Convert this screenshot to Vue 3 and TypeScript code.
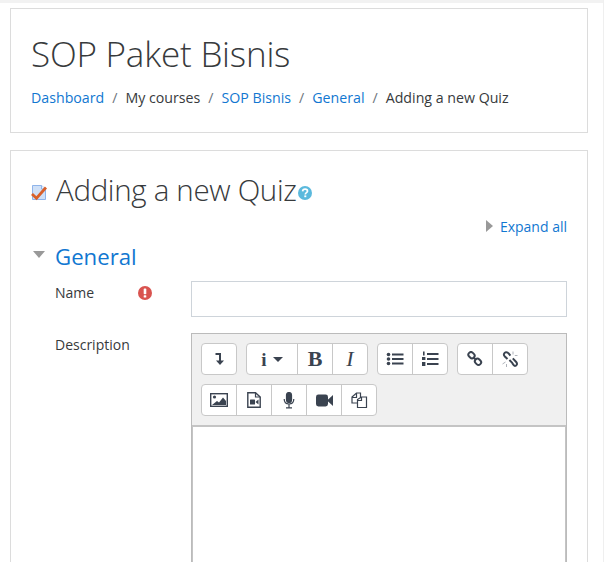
<script setup lang="ts">
const crumbs: { text: string; link: boolean }[] = [
  { text: 'Dashboard', link: true },
  { text: 'My courses', link: false },
  { text: 'SOP Bisnis', link: true },
  { text: 'General', link: true },
  { text: 'Adding a new Quiz', link: false },
]
</script>

<template>
  <div class="page">
    <div class="topbar"></div>
    <main class="wrap">
      <section class="card head">
        <h1>SOP Paket Bisnis</h1>
        <nav class="crumbs">
          <template v-for="(c, i) in crumbs" :key="c.text">
            <span v-if="i > 0" class="sep">/</span>
            <a v-if="c.link" class="link">{{ c.text }}</a>
            <span v-else>{{ c.text }}</span>
          </template>
        </nav>
      </section>

      <section class="card form">
        <div class="title-row">
          <svg class="quiz-icon" width="16" height="17" viewBox="0 0 16 17">
            <path d="M1.5 1.5H10.5L14.5 5V15.5H1.5Z" fill="#cfe0f7" stroke="#8fb4ea" />
            <path d="M10.5 1.5V5H14.5" fill="#eaf2fd" stroke="#8fb4ea" />
            <path d="M1 10L5.5 14.2L15 3.5" fill="none" stroke="#d9602a" stroke-width="2.8" />
          </svg>
          <h2>Adding a new Quiz</h2>
          <svg class="help" width="14" height="14" viewBox="0 0 14 14">
            <circle cx="7" cy="7" r="7" fill="#5bb9dd" />
            <path d="M4.6 5.4C4.7 3.9 5.7 3.2 7.1 3.2C8.5 3.2 9.5 4 9.5 5.2C9.5 6.6 7.3 6.7 7.3 8.4" fill="none" stroke="#fff" stroke-width="1.7" />
            <rect x="6.3" y="9.4" width="2" height="1.8" fill="#fff" />
          </svg>
        </div>

        <div class="expand-row">
          <span class="tri-right"></span>
          <a class="link">Expand all</a>
        </div>

        <div class="legend">
          <span class="tri-down"></span>
          <a class="general">General</a>
        </div>

        <div class="field name-field">
          <div class="label">
            <span>Name</span>
            <svg width="14" height="14" viewBox="0 0 14 14">
              <circle cx="7" cy="7" r="7" fill="#d9534f" />
              <rect x="5.7" y="2.6" width="2.6" height="5.6" rx="0.8" fill="#fff" />
              <rect x="5.7" y="9.2" width="2.6" height="2.3" rx="0.6" fill="#fff" />
            </svg>
          </div>
          <input class="text-input" type="text" />
        </div>

        <div class="field desc-field">
          <div class="label"><span>Description</span></div>
          <div class="editor">
            <div class="toolbar">
              <div class="group">
                <button class="btn">
                  <svg width="12" height="14" viewBox="0 0 12 14"><path d="M2.5 2H7V10" fill="none" stroke="#3a4350" stroke-width="2" /><path d="M3 8.5H11L7 13Z" fill="#3a4350" /></svg>
                </button>
              </div>
              <div class="group">
                <button class="btn wide">
                  <span class="info-i">i</span>
                  <span class="caret"></span>
                </button>
                <button class="btn"><span class="bold">B</span></button>
                <button class="btn"><span class="italic">I</span></button>
              </div>
              <div class="group">
                <button class="btn">
                  <svg width="18" height="14" viewBox="0 0 18 14" fill="#3a4350">
                    <circle cx="2.5" cy="2.5" r="1.8" /><circle cx="2.5" cy="7" r="1.8" /><circle cx="2.5" cy="11.5" r="1.8" />
                    <rect x="6" y="1.5" width="11.5" height="2" /><rect x="6" y="6" width="11.5" height="2" /><rect x="6" y="10.5" width="11.5" height="2" />
                  </svg>
                </button>
                <button class="btn">
                  <svg width="18" height="16" viewBox="0 0 18 16" fill="#3a4350">
                    <rect x="2" y="0.5" width="1.6" height="4" /><rect x="1" y="6" width="3.4" height="3" /><rect x="1" y="11" width="3.4" height="4" />
                    <rect x="6" y="2" width="11.5" height="2" /><rect x="6" y="7" width="11.5" height="2" /><rect x="6" y="12" width="11.5" height="2" />
                  </svg>
                </button>
              </div>
              <div class="group">
                <button class="btn">
                  <svg width="16" height="16" viewBox="0 0 16 16" fill="none" stroke="#3a4350" stroke-width="2">
                    <rect x="1.2" y="1.6" width="6.6" height="5.2" rx="2.6" transform="rotate(45 4.5 4.2)" />
                    <rect x="7.7" y="8.2" width="6.6" height="5.2" rx="2.6" transform="rotate(45 11 10.8)" />
                    <path d="M6.5 6.5L9 8.8" />
                  </svg>
                </button>
                <button class="btn">
                  <svg width="16" height="17" viewBox="0 0 16 17" fill="none" stroke="#3a4350" stroke-width="2">
                    <path d="M5.5 8L2.6 5.2C1.2 3.6 2 1.6 4 1.2C5.4 1 6.2 1.8 7 2.8L8.4 4.6" />
                    <path d="M7.4 9L10 11.6C10.8 12.6 11.4 14.8 13 15C15 15 15.6 12.6 14.2 11L10.8 7.4" />
                    <path d="M11 0.5V3.5M12.8 4.5H15.5M0.5 13L3.5 11M4.5 16V13" stroke="#9aa0a8" stroke-width="0.8" />
                  </svg>
                </button>
              </div>
              <div class="group">
                <button class="btn">
                  <svg width="18" height="14" viewBox="0 0 18 14">
                    <rect x="0.7" y="0.7" width="16.6" height="12.6" fill="#fff" stroke="#3a4350" stroke-width="1.4" />
                    <circle cx="4.5" cy="4" r="1.6" fill="#3a4350" />
                    <path d="M2 12L7 8L9 9.5L13 4.5L16 8V12Z" fill="#3a4350" />
                  </svg>
                </button>
                <button class="btn">
                  <svg width="14" height="16" viewBox="0 0 14 16">
                    <path d="M0.8 0.8H8.5L13.2 5V15.2H0.8Z" fill="#fff" stroke="#3a4350" stroke-width="1.4" />
                    <path d="M8.5 0.8V5H13.2" fill="none" stroke="#3a4350" stroke-width="1.2" />
                    <rect x="3" y="7.5" width="5" height="5" rx="0.6" fill="#3a4350" />
                    <path d="M8.5 10L11.5 7.5V12.5Z" fill="#3a4350" />
                  </svg>
                </button>
                <button class="btn">
                  <svg width="12" height="17" viewBox="0 0 12 17" fill="none" stroke="#3a4350" stroke-width="1.2">
                    <rect x="3.5" y="0.5" width="5" height="10" rx="2.5" fill="#3a4350" />
                    <path d="M1.2 7C1.2 10.2 3 12 6 12S10.8 10.2 10.8 7M6 12V15.5M3 15.8H9" />
                  </svg>
                </button>
                <button class="btn">
                  <svg width="17" height="13" viewBox="0 0 17 13" fill="#3a4350">
                    <rect x="0" y="0.5" width="12" height="12" rx="2.4" />
                    <path d="M11 6.5L17 1V12Z" />
                  </svg>
                </button>
                <button class="btn">
                  <svg width="17" height="17" viewBox="0 0 17 17" fill="#fff" stroke="#3a4350" stroke-width="1.2">
                    <path d="M1 5L5.5 1H9.5V11H1Z" />
                    <path d="M1 5.5H5.5V1" fill="none" />
                    <path d="M6.5 7.5L10.5 5H15.5V15.5H6.5Z" />
                    <path d="M6.5 8.5H10.5V5" fill="none" />
                  </svg>
                </button>
              </div>
            </div>
            <div class="content"></div>
          </div>
        </div>
      </section>
    </main>
    <div class="edge"></div>
  </div>
</template>

<style>
html, body { margin: 0; background: #fff; overflow: hidden; }
</style>

<style scoped>
.page {
  position: relative;
  width: 604px;
  height: 562px;
  overflow: hidden;
  background: #fff;
  font-family: "Open Sans", "Noto Sans", sans-serif;
  font-size: 14px;
  color: #373a3c;
}
.topbar {
  height: 3px;
  background: #f2f2f2;
}
.edge {
  position: absolute;
  top: 0;
  right: 0;
  bottom: 0;
  width: 1px;
  background: #efefef;
}
.wrap {
  display: flex;
  flex-direction: column;
  gap: 17px;
  padding: 5px 16px 0 10px;
}
.card {
  border: 1px solid #dcdcdc;
  background: #fff;
}
.head {
  height: 125px;
  box-sizing: border-box;
  padding: 22px 20px 0;
}
h1 {
  margin: 0;
  font-size: 35px;
  font-weight: 300;
  line-height: 46px;
  letter-spacing: -0.2px;
  color: #373a3c;
}
.crumbs {
  display: flex;
  align-items: center;
  margin-top: 11px;
  font-size: 14.2px;
  line-height: 20px;
  white-space: nowrap;
}
.sep {
  margin: 0 8px;
  color: #6c757d;
}
.link {
  color: #1177d1;
}
.form {
  height: 460px;
  box-sizing: border-box;
  padding: 18px 20px 0;
}
.title-row {
  display: flex;
  align-items: center;
  height: 42px;
}
.quiz-icon {
  margin: 4px 9px 0 0;
  flex: none;
}
h2 {
  margin: 0;
  font-size: 29.5px;
  font-weight: 300;
  line-height: 42px;
  letter-spacing: -0.32px;
  color: #373a3c;
}
.help {
  margin: 6px 0 0 1px;
  flex: none;
}
.expand-row {
  display: flex;
  justify-content: flex-end;
  align-items: center;
  gap: 7px;
  height: 20px;
  margin-top: 5px;
  font-size: 14px;
}
.tri-right {
  width: 0;
  height: 0;
  border-left: 7px solid #999;
  border-top: 6.5px solid transparent;
  border-bottom: 6.5px solid transparent;
}
.legend {
  display: flex;
  align-items: center;
  height: 30px;
  margin-top: 5px;
}
.tri-down {
  width: 0;
  height: 0;
  margin: 0 10px 4px 2px;
  border-top: 7px solid #999;
  border-left: 6px solid transparent;
  border-right: 6px solid transparent;
}
.general {
  font-size: 22.2px;
  color: #1177d1;
}
.field {
  display: flex;
}
.name-field {
  margin-top: 10px;
}
.desc-field {
  margin-top: 16px;
}
.label {
  display: flex;
  justify-content: space-between;
  align-items: flex-start;
  box-sizing: border-box;
  width: 121px;
  flex: none;
  padding: 3px 0 0 24px;
  margin-right: 39px;
  line-height: 18px;
}
.label svg {
  margin-top: 2px;
}
.text-input {
  width: 376px;
  height: 36px;
  box-sizing: border-box;
  border: 1px solid #ced4da;
  background: #fff;
  margin: 0;
  padding: 0;
}
.editor {
  width: 376px;
  height: 300px;
  box-sizing: border-box;
  border: 1px solid #bbb;
  background: #f0f0f0;
}
.toolbar {
  display: flex;
  flex-wrap: wrap;
  gap: 9px;
  padding: 9px 10px 9px 9px;
}
.group {
  display: flex;
  height: 32px;
  box-sizing: border-box;
  border: 1px solid #c8c8c8;
  border-radius: 4px;
  background: #fff;
}
.btn {
  display: flex;
  align-items: center;
  justify-content: center;
  width: 35px;
  padding: 0;
  border: 0;
  border-left: 1px solid #c8c8c8;
  background: transparent;
  font: inherit;
  color: #3a4350;
}
.btn:first-child {
  border-left: 0;
  width: 34px;
}
.btn.wide {
  width: 50px;
  gap: 6px;
}
.info-i {
  font-family: "Liberation Serif", serif;
  font-weight: 700;
  font-size: 19px;
  line-height: 1;
  color: #3a4350;
}
.caret {
  width: 0;
  height: 0;
  border-top: 5px solid #3a4350;
  border-left: 5px solid transparent;
  border-right: 5px solid transparent;
}
.bold,
.italic {
  font-family: "Liberation Serif", serif;
  font-size: 22px;
  line-height: 1;
  color: #3a4350;
}
.bold { font-weight: 700; }
.italic { font-style: italic; }
.content {
  height: 160px;
  border: 1px solid #c4c4c4;
  border-top-width: 2px;
  background: #fff;
  box-sizing: border-box;
}
</style>
